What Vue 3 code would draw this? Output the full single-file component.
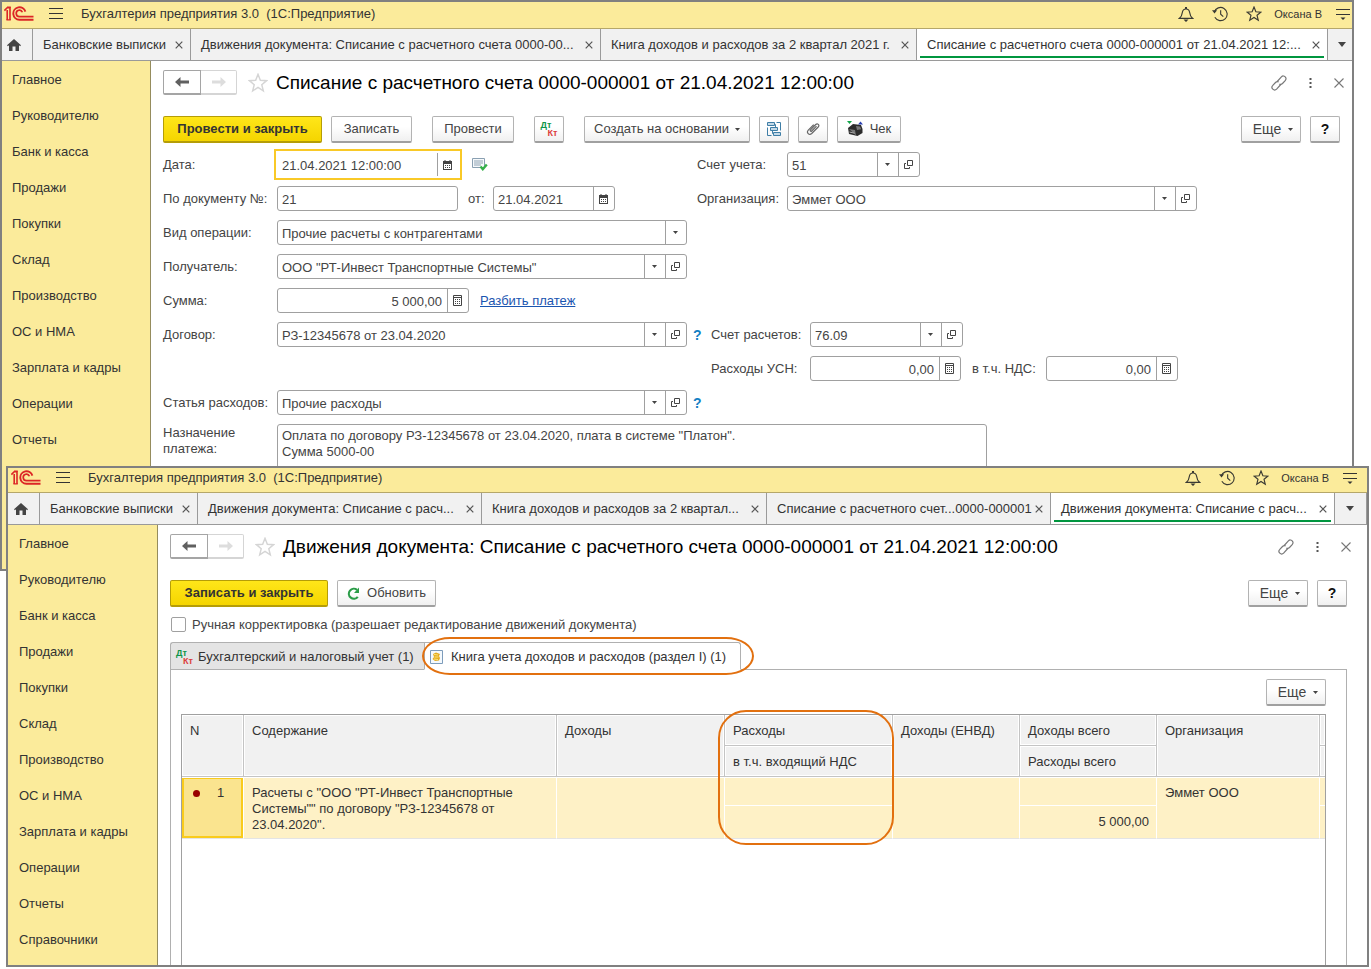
<script setup>
const menu = [
  'Главное', 'Руководителю', 'Банк и касса', 'Продажи', 'Покупки', 'Склад', 'Производство',
  'ОС и НМА', 'Зарплата и кадры', 'Операции', 'Отчеты', 'Справочники'
]

const windows = [
  {
    id: 'payment',
    title: 'Списание с расчетного счета 0000-000001 от 21.04.2021 12:00:00',
    tabs: [
      { text: 'Движения документа: Списание с расчетного счета 0000-00...', share: 410 },
      { text: 'Книга доходов и расходов за 2 квартал 2021 г.', share: 316 },
      { text: 'Списание с расчетного счета 0000-000001 от 21.04.2021 12:...', share: 411, active: true }
    ]
  },
  {
    id: 'entries',
    title: 'Движения документа: Списание с расчетного счета 0000-000001 от 21.04.2021 12:00:00',
    tabs: [
      { text: 'Движения документа: Списание с расч...', share: 284 },
      { text: 'Книга доходов и расходов за 2 квартал...', share: 285 },
      { text: 'Списание с расчетного счет...0000-000001', share: 284 },
      { text: 'Движения документа: Списание с расч...', share: 284, active: true }
    ]
  }
]
</script>

<template>
  <svg class="sprite" aria-hidden="true">
    <symbol id="i-logo" viewBox="0 0 30 15">
      <g fill="none" stroke="#dc2626">
        <path stroke-width="1.600" d="M.4 4.600 3.200 1.800H6V14M3.200 4V14" />
        <path stroke-width="1.200" d="M2.400 13.900h4.400M3 1.200h3.800" />
        <path stroke-width="1.900" d="M21.400 5.600A6.200 6.200 0 1 0 15.400 13.700H29.500" />
        <path stroke-width="1.700" d="M18.400 6.200A3.200 3.200 0 1 0 15.400 10.600H29.500" />
      </g>
    </symbol>
    <symbol id="i-burger" viewBox="0 0 14 12"><path d="M0 .5h14M0 5.500h14M0 10.500h14" stroke="#333" /></symbol>
    <symbol id="i-bell" viewBox="0 0 16 16">
      <path d="M1.500 12.300c2.400-2 2.600-3.600 2.900-6 .3-2.200 1.600-3.300 3.600-3.300s3.300 1.100 3.600 3.300c.3 2.400.5 4 2.900 6z" fill="none" stroke="#3a3a33" stroke-width="1.200" />
      <path d="M7 1h2v2H7zM5.500 13.500h5L8 16z" fill="#3a3a33" />
    </symbol>
    <symbol id="i-clock" viewBox="0 0 17 16">
      <path d="M2.400 6A7 7 0 1 1 3 11.500M9.200 4v4.300l2.800 2.500" fill="none" stroke="#3a3a33" stroke-width="1.200" />
      <path d="M0 4h5.400L2.700 7.600z" fill="#3a3a33" />
    </symbol>
    <symbol id="i-star" viewBox="0 0 18 18">
      <path d="M9 1.200l2.100 5.300 5.600.4-4.300 3.600 1.400 5.600L9 13l-4.800 3.100 1.400-5.600L1.300 6.900l5.600-.4z" fill="none" stroke="currentColor" stroke-width="1.300" />
    </symbol>
    <symbol id="i-menu" viewBox="0 0 14 14">
      <path d="M0 2.500h14M0 7.500h14" stroke="#333" /><path d="M4.500 10.500h5L7 13z" fill="#333" />
    </symbol>
    <symbol id="i-home" viewBox="0 0 14 12">
      <path d="M7 0l7 6.200-.9 1-1.100-.9V12H8.500V7.500h-3V12H2V6.300l-1.100.9-.9-1z" fill="#444" />
    </symbol>
    <symbol id="i-x" viewBox="0 0 8 8"><path d="M.7.7l6.600 6.600M7.300.7L.7 7.300" stroke="currentColor" stroke-width="1.200" /></symbol>
    <symbol id="i-close" viewBox="0 0 10 10"><path d="M.5.5l9 9M9.500.5l-9 9" stroke="currentColor" stroke-width="1.100" /></symbol>
    <symbol id="i-down" viewBox="0 0 8 5"><path d="M0 0h8L4 5z" fill="#444" /></symbol>
    <symbol id="i-small-down" viewBox="0 0 5 3"><path d="M0 0h5L2.500 3z" fill="#444" /></symbol>
    <symbol id="i-left" viewBox="0 0 14 10">
      <path d="M5.500 0v3.500H14v3H5.500V10L0 5z" fill="currentColor" />
    </symbol>
    <symbol id="i-link" viewBox="0 0 16 16">
      <g fill="none" stroke="#777" stroke-width="1.200">
        <path d="M6.200 6.500l4.200-4.700c1.200-1.200 2.800-1 3.800 0s1.200 2.600 0 3.800L11.500 8.500c-1 1-2.100 1-3.100.6" />
        <path d="M9.800 9.500l-4.200 4.700c-1.200 1.200-2.800 1-3.800 0s-1.200-2.600 0-3.800L4.500 7.500c1-1 2.100-1 3.100-.6" />
      </g>
    </symbol>
    <symbol id="i-dots" viewBox="0 0 3 12"><path d="M.5 1h2v2h-2zM.5 5h2v2h-2zM.5 9h2v2h-2z" fill="#555" /></symbol>
    <symbol id="i-tree" viewBox="0 0 16 16">
      <g fill="#c3d9e8" stroke="#3f7ea6">
        <path d="M1.500 1.500h7v3h-7zM4.500 6.500h7v3h-7zM7.500 11.500h7v3h-7z" />
        <path d="M10.500 1.500h4v8M5.500 14.500h-4v-8M6.500 9.500v3h1M9.500 6.500v-3h-1" fill="none" />
      </g>
    </symbol>
    <symbol id="i-clip" viewBox="0 0 14 14">
      <path d="M10.500 4.200L5.700 9c-.9.900-2.100-.3-1.200-1.200l5.200-5.300c1.900-1.700 4.200.6 2.500 2.500l-6.500 6.500c-2.500 2.300-5.700-.9-3.400-3.400l5.400-5.500" fill="none" stroke="#666" stroke-width="1.200" />
    </symbol>
    <symbol id="i-till" viewBox="0 0 17 16">
      <path d="M1 7l5-4 8 1 1.500 4v4l-5 3L2 13z" fill="#2c2c2c" />
      <path d="M2 8l6 1 1 5.500M9 5l4 .6 1.200 2.600-4.200.8z" fill="#777" />
      <path d="M2.500 11l5 1.200" stroke="#aaa" />
      <path d="M0 0h5L2.500 3z" fill="#12a54a" /><path d="M11 3.500h5L13.500.5z" fill="#2a3fb0" />
    </symbol>
    <symbol id="i-calendar" viewBox="0 0 9 10">
      <path d="M0 1h9v9H0z" fill="#444" /><path d="M1 4h7v5H1z" fill="#fff" />
      <path d="M2 0v2M7 0v2" stroke="#444" />
      <path d="M2 5.500h5M2 7.500h5" stroke="#444" stroke-dasharray="1 1" />
    </symbol>
    <symbol id="i-calc" viewBox="0 0 9 11">
      <path d="M.5.5h8v10h-8zM.5 2.500h8" fill="none" stroke="#444" />
      <path d="M2 4.500h5M2 6.500h5M2 8.500h5" stroke="#444" stroke-dasharray="1 1" />
    </symbol>
    <symbol id="i-open" viewBox="0 0 9 9">
      <path d="M3.500.5h5v5h-5zM2 3.500H.5v5h5V7" fill="none" stroke="#444" />
    </symbol>
    <symbol id="i-posted" viewBox="0 0 16 13">
      <path d="M.5.5h12v9H.5z" fill="#f6f9fb" stroke="#8aa0b2" /><path d="M2 3h9M2 5h9M2 7h7" stroke="#8fa3b3" />
      <path d="M8.500 8.500l2.300 2.700 4-4.700" fill="none" stroke="#35b04a" stroke-width="2.400" />
    </symbol>
    <symbol id="i-refresh" viewBox="0 0 13 13">
      <path d="M10.800 9.900A5 5 0 1 1 10 2.800" fill="none" stroke="#2b9c48" stroke-width="2.200" />
      <path d="M12 .5v5.500H7z" fill="#2b9c48" />
    </symbol>
    <symbol id="i-coins" viewBox="0 0 13 14">
      <path d="M.5.5h12v13H.5z" fill="#f4f9fd" stroke="#7d9cbb" />
      <path d="M3 4l3-1.500L10 4l-1 2 1 2-1 2.500-4 .5-2.500-2L4 7z" fill="#e5ab1c" />
      <path d="M4 4.500l4 .5M4.500 7h4M4 9l4 .5" stroke="#fbe57c" />
    </symbol>
  </svg>

  <main class="desktop">
    <section v-for="win in windows" :key="win.id" class="window" :class="win.id">
      <header class="bar">
        <svg class="logo"><use href="#i-logo" /></svg>
        <button class="bare" aria-label="Меню"><svg class="burger"><use href="#i-burger" /></svg></button>
        <span class="app-name">Бухгалтерия предприятия 3.0&nbsp; (1С:Предприятие)</span>
        <div class="tools">
          <button class="bare" aria-label="Уведомления"><svg class="s16"><use href="#i-bell" /></svg></button>
          <button class="bare" aria-label="История"><svg class="s16"><use href="#i-clock" /></svg></button>
          <button class="bare dark" aria-label="Избранное"><svg class="s16"><use href="#i-star" /></svg></button>
        </div>
        <button class="bare user">Оксана В</button>
        <button class="bare" aria-label="Настройки"><svg class="s14"><use href="#i-menu" /></svg></button>
      </header>

      <nav class="tabs">
        <button class="bare home" aria-label="Начальная страница"><svg class="house"><use href="#i-home" /></svg></button>
        <div class="tab first">
          <button class="bare tab-name">Банковские выписки</button>
          <button class="bare" aria-label="Закрыть"><svg class="s8"><use href="#i-x" /></svg></button>
        </div>
        <div v-for="(tab, i) in win.tabs" :key="i" class="tab" :class="{ active: tab.active }" :style="{ flex: `${tab.share} ${tab.share} ${tab.share}px` }">
          <button class="bare tab-name">{{ tab.text }}</button>
          <button class="bare" aria-label="Закрыть"><svg class="s8"><use href="#i-x" /></svg></button>
        </div>
        <button class="bare more-tabs" aria-label="Все вкладки"><svg class="down"><use href="#i-down" /></svg></button>
      </nav>

      <div class="body">
        <aside class="side">
          <a v-for="item in menu" :key="item" href="#">{{ item }}</a>
        </aside>

        <article class="page">
          <div class="heading">
            <div class="history">
              <button aria-label="Назад"><svg class="arrow"><use href="#i-left" /></svg></button>
              <button disabled aria-label="Вперед"><svg class="arrow flip"><use href="#i-left" /></svg></button>
            </div>
            <button class="bare fav" aria-label="В избранное"><svg class="s20"><use href="#i-star" /></svg></button>
            <h1>{{ win.title }}</h1>
            <div class="corner">
              <button class="bare" aria-label="Ссылка"><svg class="s16"><use href="#i-link" /></svg></button>
              <button class="bare" aria-label="Действия"><svg class="dots"><use href="#i-dots" /></svg></button>
              <button class="bare shut" aria-label="Закрыть"><svg class="s10"><use href="#i-close" /></svg></button>
            </div>
          </div>

          <template v-if="win.id === 'payment'">
            <div class="toolbar">
              <button class="btn main w159">Провести и закрыть</button>
              <button class="btn w81">Записать</button>
              <button class="btn w82 apart">Провести</button>
              <button class="btn icon apart" aria-label="Дт Кт"><span class="dtkt"><b>Дт</b><b>Кт</b></span></button>
              <button class="btn create apart">Создать на основании <svg class="caret"><use href="#i-small-down" /></svg></button>
              <button class="btn icon" aria-label="Структура подчиненности"><svg class="s16"><use href="#i-tree" /></svg></button>
              <button class="btn icon" aria-label="Файлы"><svg class="s14"><use href="#i-clip" /></svg></button>
              <button class="btn check"><svg class="till"><use href="#i-till" /></svg>Чек</button>
              <span class="fill"></span>
              <button class="btn more">Еще <svg class="caret"><use href="#i-small-down" /></svg></button>
              <button class="btn icon help">?</button>
            </div>

            <form class="form" @submit.prevent>
              <div class="row">
                <div class="left">
                  <label class="cap" for="date">Дата:</label>
                  <div class="field w182 focused">
                    <input id="date" value="21.04.2021 12:00:00">
                    <button type="button" aria-label="Календарь"><svg class="cal"><use href="#i-calendar" /></svg></button>
                  </div>
                  <svg class="posted"><use href="#i-posted" /></svg>
                </div>
                <label class="cap90" for="acc">Счет учета:</label>
                <div class="field w133">
                  <div class="pick"><select id="acc"><option>51</option></select><span><svg class="caret"><use href="#i-small-down" /></svg></span></div>
                  <button type="button" aria-label="Открыть"><svg class="open"><use href="#i-open" /></svg></button>
                </div>
              </div>
              <div class="row">
                <div class="left">
                  <label class="cap" for="num">По документу №:</label>
                  <div class="field w181"><input id="num" value="21"></div>
                  <label class="from" for="from">от:</label>
                  <div class="field w122">
                    <input id="from" value="21.04.2021">
                    <button type="button" aria-label="Календарь"><svg class="cal"><use href="#i-calendar" /></svg></button>
                  </div>
                </div>
                <label class="cap90" for="org">Организация:</label>
                <div class="field w410">
                  <div class="pick"><select id="org"><option>Эммет ООО</option></select><span><svg class="caret"><use href="#i-small-down" /></svg></span></div>
                  <button type="button" aria-label="Открыть"><svg class="open"><use href="#i-open" /></svg></button>
                </div>
              </div>
              <div class="row">
                <label class="cap" for="kind">Вид операции:</label>
                <div class="field w410">
                  <div class="pick"><select id="kind"><option>Прочие расчеты с контрагентами</option></select><span><svg class="caret"><use href="#i-small-down" /></svg></span></div>
                </div>
              </div>
              <div class="row">
                <label class="cap" for="payee">Получатель:</label>
                <div class="field w410">
                  <div class="pick"><select id="payee"><option>ООО "РТ-Инвест Транспортные Системы"</option></select><span><svg class="caret"><use href="#i-small-down" /></svg></span></div>
                  <button type="button" aria-label="Открыть"><svg class="open"><use href="#i-open" /></svg></button>
                </div>
              </div>
              <div class="row">
                <label class="cap" for="sum">Сумма:</label>
                <div class="field w192">
                  <input id="sum" class="num" value="5 000,00">
                  <button type="button" aria-label="Калькулятор"><svg class="calc"><use href="#i-calc" /></svg></button>
                </div>
                <a class="split" href="#">Разбить платеж</a>
              </div>
              <div class="row">
                <div class="left deep">
                  <label class="cap" for="deal">Договор:</label>
                  <div class="field w410">
                    <div class="pick"><select id="deal"><option>РЗ-12345678 от 23.04.2020</option></select><span><svg class="caret"><use href="#i-small-down" /></svg></span></div>
                    <button type="button" aria-label="Открыть"><svg class="open"><use href="#i-open" /></svg></button>
                  </div>
                  <button type="button" class="bare hint">?</button>
                </div>
                <label class="cap99" for="settle">Счет расчетов:</label>
                <div class="field w153">
                  <div class="pick"><select id="settle"><option>76.09</option></select><span><svg class="caret"><use href="#i-small-down" /></svg></span></div>
                  <button type="button" aria-label="Открыть"><svg class="open"><use href="#i-open" /></svg></button>
                </div>
              </div>
              <div class="row">
                <div class="left deep"></div>
                <label class="cap99" for="usn">Расходы УСН:</label>
                <div class="field w151">
                  <input id="usn" class="num" value="0,00">
                  <button type="button" aria-label="Калькулятор"><svg class="calc"><use href="#i-calc" /></svg></button>
                </div>
                <label class="vat" for="vat">в т.ч. НДС:</label>
                <div class="field w132">
                  <input id="vat" class="num" value="0,00">
                  <button type="button" aria-label="Калькулятор"><svg class="calc"><use href="#i-calc" /></svg></button>
                </div>
              </div>
              <div class="row">
                <label class="cap" for="item">Статья расходов:</label>
                <div class="field w410">
                  <div class="pick"><select id="item"><option>Прочие расходы</option></select><span><svg class="caret"><use href="#i-small-down" /></svg></span></div>
                  <button type="button" aria-label="Открыть"><svg class="open"><use href="#i-open" /></svg></button>
                </div>
                <button type="button" class="bare hint">?</button>
              </div>
              <div class="row top">
                <label class="cap" for="purpose">Назначение<br>платежа:</label>
                <textarea id="purpose" rows="3">Оплата по договору РЗ-12345678 от 23.04.2020, плата в системе "Платон".
Сумма 5000-00</textarea>
              </div>
            </form>
          </template>

          <template v-else>
            <div class="toolbar">
              <button class="btn main w158">Записать и закрыть</button>
              <button class="btn reload"><svg class="s13"><use href="#i-refresh" /></svg>Обновить</button>
              <span class="fill"></span>
              <button class="btn more">Еще <svg class="caret"><use href="#i-small-down" /></svg></button>
              <button class="btn icon help">?</button>
            </div>
            <label class="manual"><input type="checkbox">Ручная корректировка (разрешает редактирование движений документа)</label>

            <div class="registers">
              <button class="register"><span class="dtkt"><b>Дт</b><b>Кт</b></span>Бухгалтерский и налоговый учет (1)</button>
              <button class="register current"><svg class="coins"><use href="#i-coins" /></svg>Книга учета доходов и расходов (раздел I) (1)<i class="mark mark-tab"></i></button>
            </div>
            <div class="panel">
              <button class="btn more">Еще <svg class="caret"><use href="#i-small-down" /></svg></button>
              <div class="sheet">
                <table>
                  <colgroup>
                    <col class="c-n"><col><col class="c-sum"><col class="c-sum"><col class="c-envd"><col class="c-total"><col class="c-org"><col class="c-rest">
                  </colgroup>
                  <thead>
                    <tr>
                      <th rowspan="2">N</th>
                      <th rowspan="2">Содержание</th>
                      <th rowspan="2">Доходы</th>
                      <th class="marked">Расходы<i class="mark mark-column"></i></th>
                      <th rowspan="2">Доходы (ЕНВД)</th>
                      <th>Доходы всего</th>
                      <th rowspan="2">Организация</th>
                      <th class="rest"></th>
                    </tr>
                    <tr>
                      <th>в т.ч. входящий НДС</th>
                      <th>Расходы всего</th>
                      <th class="rest"></th>
                    </tr>
                  </thead>
                  <tbody>
                    <tr>
                      <td rowspan="2" class="chosen"><span class="line"><i class="dot"></i>1</span></td>
                      <td rowspan="2" class="last">Расчеты с "ООО "РТ-Инвест Транспортные<br>Системы"" по договору "РЗ-12345678 от<br>23.04.2020".</td>
                      <td rowspan="2" class="last"></td>
                      <td></td>
                      <td rowspan="2" class="last"></td>
                      <td></td>
                      <td rowspan="2" class="last">Эммет ООО</td>
                      <td class="rest"></td>
                    </tr>
                    <tr>
                      <td class="last"></td>
                      <td class="last amount">5 000,00</td>
                      <td class="last rest"></td>
                    </tr>
                  </tbody>
                </table>
              </div>
            </div>
          </template>
        </article>
      </div>
    </section>
  </main>
</template>

<style>
html, body { margin: 0; background: #fff; }
</style>

<style scoped>
* { box-sizing: border-box; }
.sprite { position: absolute; width: 0; height: 0; }
svg { display: block; flex: none; }
.desktop {
  position: relative; min-height: 100vh; overflow: hidden;
  font: 13px/16px "Liberation Sans", Arial, sans-serif; color: #333;
}
button, input, select, textarea { font: inherit; color: inherit; margin: 0; }
.bare { border: 0; padding: 0; background: none; display: flex; align-items: center; justify-content: center; white-space: nowrap; }
.dark { color: #3a3a33; }

.window {
  position: absolute; border: 2px solid #808080; background: #fff; overflow: hidden;
  display: flex; flex-direction: column;
}
.payment { left: 0; right: 17px; top: 0; height: 571px; --lead: 0px; --trail: 0px; --bar: 26px; --lift: 3px; }
.entries { left: 6px; right: 2px; top: 466px; bottom: 2px; --lead: 1px; --trail: 8px; --bar: 24px; --lift: 5px; }

.bar {
  display: flex; align-items: center; flex: none; height: calc(var(--bar) + 1px);
  padding: 0 calc(2px + var(--trail)) var(--lift) calc(2px + var(--lead));
  background: #fbeb9b; border-bottom: 1px solid #b5a76a;
}
.logo { width: 30px; height: 15px; margin-right: 15px; }
.burger { width: 14px; height: 12px; }
.app-name { margin-left: 18px; flex: 1; white-space: nowrap; }
.tools { display: flex; gap: 18px; }
.user { font-size: 11px; margin: 0 14px 0 12px; }
.s8 { width: 8px; height: 8px; }
.s10 { width: 10px; height: 10px; }
.s13 { width: 13px; height: 13px; }
.s14 { width: 14px; height: 14px; }
.s16 { width: 16px; height: 16px; }
.s20 { width: 20px; height: 20px; }

.tabs { display: flex; flex: none; height: 32px; background: #f1f1f1; border-bottom: 1px solid #9a9a9a; }
.home { width: calc(30px + var(--lead)); padding-right: 7px; flex: none; }
.house { width: 14px; height: 12px; margin-left: 1px; }
.tab {
  display: flex; align-items: center; justify-content: space-between; min-width: 0;
  border-left: 1px solid #9a9a9a; padding: 1px 7px 0 10px; position: relative; color: #555;
}
.tab.first { flex: 0 0 158px; }
.tab-name { color: #333; min-width: 0; }
.tab.active { background: #fff; }
.tab.active::after { content: ""; position: absolute; left: 3px; right: 3px; bottom: 2px; height: 2px; background: #00963f; }
.more-tabs { flex: none; width: calc(25px + var(--trail)); border-left: 1px solid #9a9a9a; padding-right: var(--trail); }
.entries .more-tabs { border-right: 1px solid #9a9a9a; padding-right: 6px; }
.down { width: 8px; height: 5px; margin-left: 4px; }

.body { display: flex; flex: 1; min-height: 0; }
.side {
  width: calc(149px + var(--lead)); flex: none; background: #fbeb9b; border-right: 1px solid #958c5d;
  padding: 1px 0 0 calc(10px + var(--lead)); overflow: hidden;
}
.side a { display: block; line-height: 36px; color: #333; text-decoration: none; }

.page {
  flex: 1; min-width: 0; display: flex; flex-direction: column;
  padding: 9px calc(12px + var(--trail)) 0 12px;
}
.heading { display: flex; align-items: center; height: 25px; flex: none; }
.history { display: flex; }
.history button {
  width: 38px; height: 25px; border: 1px solid #a5a5a5; border-bottom-width: 2px; border-radius: 2px 0 0 2px; background: #fff;
  display: flex; align-items: center; justify-content: center; padding: 0; color: #606060;
}
.history button:disabled { width: 36px; border-color: #d5d5d5; border-left: 0; border-radius: 0 2px 2px 0; color: #ddd; }
.arrow { width: 14px; height: 10px; }
.flip { transform: rotate(180deg); }
.fav { color: #d5d5d5; margin: 0 8px 0 11px; }
h1 { font-size: 19px; line-height: 24px; font-weight: 400; color: #000; margin: 0; flex: 1; white-space: nowrap; }
.corner { display: flex; align-items: center; gap: 22px; color: #777; }
.shut { margin-right: -4px; }
.dots { width: 3px; height: 12px; }

.toolbar { display: flex; gap: 9px; margin-top: 21px; flex: none; }
.btn {
  height: 27px; border: 1px solid #b3b3b3; border-bottom: 2px solid #a0a0a0; border-radius: 2px; padding: 0;
  background: linear-gradient(#fff 40%, #f0f0f0); color: #444; white-space: nowrap;
  display: flex; align-items: center; justify-content: center; gap: 6px;
}
.btn.main { background: linear-gradient(#ffe619, #f5d500); border-color: #b59d07; font-weight: 700; color: #333; }
.w158 { width: 158px; }
.w159 { width: 159px; }
.w81 { width: 81px; }
.w82 { width: 82px; }
.apart { margin-left: 11px; }
.icon { width: 30px; }
.create { width: 166px; }
.check { width: 64px; }
.reload { width: 99px; gap: 7px; }
.more { width: 60px; font-size: 14px; gap: 7px; padding-left: 4px; }
.help { font-weight: 700; color: #111; font-size: 14px; }
.fill { flex: 1; }
.caret { width: 5px; height: 3px; }
.dtkt { width: 17px; display: grid; font-size: 9px; line-height: 8px; color: #0d9548; text-align: left; }
.dtkt b:last-child { color: #dc3c3c; text-align: right; }
.till { width: 17px; height: 16px; }

.form { display: flex; flex-direction: column; gap: 9px; margin-top: 9px; color: #444; }
.row, .left { display: flex; align-items: center; height: 25px; }
.left { width: 534px; flex: none; }
.left.deep { width: 548px; }
.cap { width: 114px; flex: none; }
.cap90 { width: 90px; flex: none; }
.cap99 { width: 99px; flex: none; }
.from { width: 35px; padding-left: 10px; }
.vat { width: 85px; padding-left: 11px; }
.field { display: flex; height: 25px; border: 1px solid #a0a0a0; border-radius: 3px; background: #fff; overflow: hidden; }
.field input { flex: 1; min-width: 0; border: 0; padding: 2px 4px 0; outline: 0; background: none; }
.field input.num { text-align: right; padding-right: 5px; }
.field button, .pick span {
  width: 21px; border: 0; border-left: 1px solid #a0a0a0; background: none; padding: 0 1px 0 0; flex: none;
  display: flex; align-items: center; justify-content: center;
}
.pick { flex: 1; min-width: 0; display: grid; }
.pick select { grid-area: 1 / 1; appearance: none; border: 0; background: none; padding: 2px 24px 0 4px; outline: 0; min-width: 0; }
.pick span { grid-area: 1 / 1; justify-self: end; pointer-events: none; }
.focused { border-color: #fff; outline: 2px solid #f9c927; outline-offset: 1px; border-radius: 0; }
.w410 { width: 410px; }
.w192 { width: 192px; }
.w182 { width: 182px; }
.w181 { width: 181px; }
.w153 { width: 153px; }
.w151 { width: 151px; }
.w133 { width: 133px; }
.w132 { width: 132px; }
.w122 { width: 122px; }
.cal { width: 9px; height: 10px; }
.calc { width: 9px; height: 11px; }
.open { width: 9px; height: 9px; }
.posted { width: 16px; height: 13px; margin-left: 13px; }
.split { margin-left: 11px; color: #1a55b0; }
.hint { color: #1380c4; font-size: 14px; font-weight: 700; margin-left: 6px; }
.row.top { height: auto; align-items: flex-start; }
.top .cap { padding-top: 1px; }
textarea { width: 710px; border: 1px solid #a0a0a0; border-radius: 3px; padding: 3px 4px; resize: none; outline: 0; display: block; }

.manual { display: flex; align-items: center; gap: 6px; height: 15px; margin: 10px 0 0 1px; color: #444; flex: none; }
.manual input { appearance: none; width: 15px; height: 15px; margin: 0; border: 1px solid #a0a0a0; border-radius: 2px; background: #fff; }
.registers { display: flex; margin-top: 10px; height: 28px; flex: none; position: relative; z-index: 1; }
.register {
  position: relative; display: flex; align-items: center; gap: 5px; width: 254px; padding: 2px 0 0 5px; height: 28px;
  border: 1px solid #b0b0b0; border-right: 0; border-radius: 3px 0 0 0; background: #e4e4e4; white-space: nowrap; color: #333;
}
.register.current { width: 317px; background: #fff; gap: 8px; border-right: 1px solid #b0b0b0; border-bottom-color: #fff; border-radius: 0 3px 0 0; }
.coins { width: 13px; height: 14px; }
.mark { position: absolute; border: 2px solid #e2700f; pointer-events: none; }
.mark-tab { inset: -6px -14px -6px -3px; border-radius: 28px / 19px; }
.mark-column { left: -7px; right: -2px; top: -5px; height: 135px; border-radius: 28px; z-index: 2; }
.panel {
  flex: 1; margin-top: -1px; border: 1px solid #b0b0b0; border-bottom: 0; padding: 9px 20px 0 10px;
  display: flex; flex-direction: column; align-items: flex-end;
}
.sheet { flex: 1; align-self: stretch; margin-top: 8px; border: 1px solid #a0a0a0; border-bottom: 0; }
table { width: 100%; table-layout: fixed; border-collapse: separate; border-spacing: 0; }
.c-n { width: 62px; }
.c-sum { width: 168px; }
.c-envd { width: 127px; }
.c-total { width: 137px; }
.c-org { width: 163px; }
.c-rest { width: 5px; }
th, td { padding: 8px 0 0 8px; vertical-align: top; text-align: left; font-weight: 400; white-space: nowrap; }
th { height: 31px; background: #f1f1f1; border-right: 1px solid #c4c4c4; border-bottom: 1px solid #c4c4c4; box-shadow: inset 0 0 0 1px #fff; }
.marked { position: relative; }
td { background: #fef1c6; border-right: 1px solid #fff; border-bottom: 1px solid #fff; height: 29px; }
tbody tr:first-child td { box-shadow: inset 0 1px #fff; }
td.last { border-bottom-color: #e4e4e4; }
tbody tr:last-child td { height: 33px; }
tbody tr:first-child td.chosen { background: #fae48f; box-shadow: inset 0 1px #fff, inset 0 0 0 2px #f9cb1c; border-bottom-color: #e4e4e4; }
th.rest, td.rest { padding: 0; border-right: 0; }
.line { display: flex; align-items: center; gap: 17px; padding-left: 3px; }
.dot { width: 7px; height: 7px; border-radius: 50%; background: #990000; }
td.amount { text-align: right; padding-right: 7px; }
</style>
